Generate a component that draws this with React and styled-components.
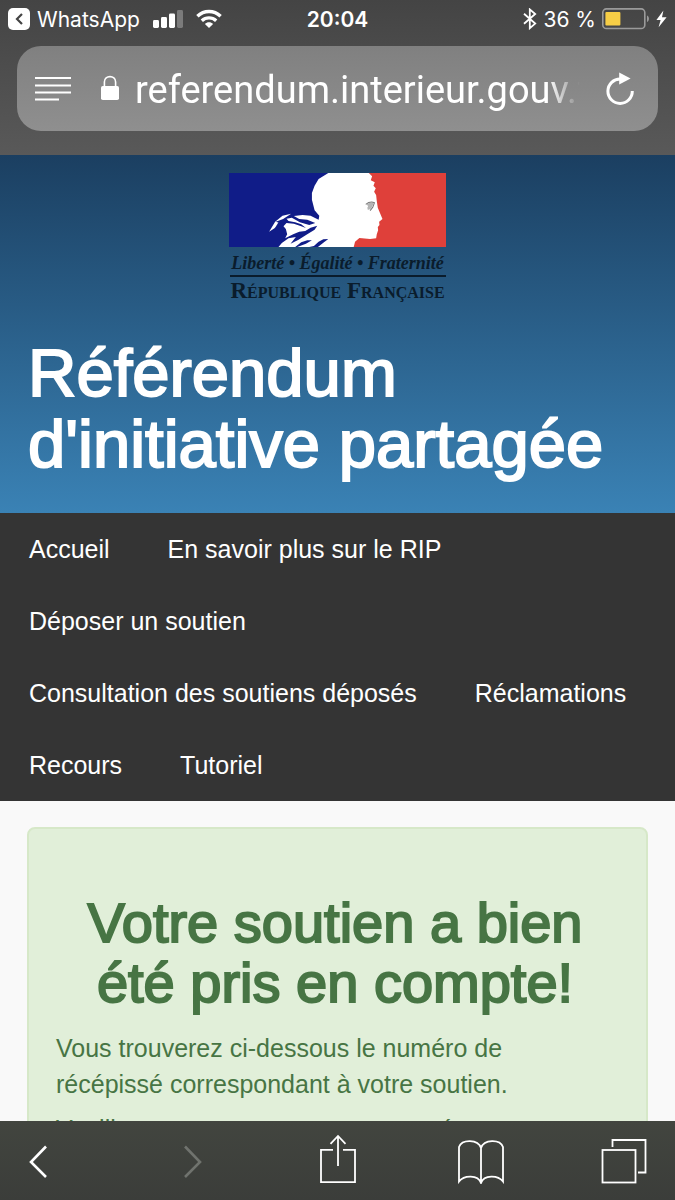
import React from "react";
import styled, { createGlobalStyle } from 'styled-components';

const navLinks = [
  'Accueil',
  'En savoir plus sur le RIP',
  'Déposer un soutien',
  'Consultation des soutiens déposés',
  'Réclamations',
  'Recours',
  'Tutoriel',
];

const SignalIcon = () => (
  <svg width="30" height="20" viewBox="0 0 30 20" fill="#fff" aria-hidden="true">
    <rect x="0" y="11" width="6" height="8" rx="1.4" />
    <rect x="8" y="8" width="6" height="11" rx="1.4" />
    <rect x="16" y="4.5" width="6" height="14.5" rx="1.4" />
    <rect x="24" y="1" width="6" height="18" rx="1.4" fill="#7b7b7b" />
  </svg>
);

const WifiIcon = () => (
  <svg width="26" height="20" viewBox="0 0 26 20" fill="none" stroke="#fff" strokeWidth="3.4" aria-hidden="true">
    <path d="M1.4 7.2C8 .9 18 .9 24.6 7.2" />
    <path d="M5.8 11.7C10 7.9 16 7.9 20.2 11.7" />
    <path d="M13 19L8.9 14.9C11.2 12.8 14.8 12.8 17.1 14.9Z" fill="#fff" stroke="none" />
  </svg>
);

const BluetoothIcon = () => (
  <svg width="14" height="22" viewBox="0 0 14 22" fill="none" stroke="#fff" strokeWidth="1.8" aria-hidden="true">
    <path d="M1 5.8L12.2 15.6L6.8 20.2V1.4L12.2 6L1 15.8" />
  </svg>
);

const BatteryIcon = () => (
  <svg width="48" height="22" viewBox="0 0 48 22" aria-hidden="true">
    <rect x="0.8" y="0.9" width="42" height="19.6" rx="3.6" fill="none" stroke="#9a9a9a" strokeWidth="1.6" />
    <rect x="3.4" y="4" width="15" height="13.6" rx="1" fill="#f7ce46" />
    <path d="M45 7.4C47.6 8.6 47.6 12.8 45 14Z" fill="#9a9a9a" />
  </svg>
);

const BoltIcon = () => (
  <svg width="11" height="20" viewBox="0 0 11 20" fill="#fff" aria-hidden="true">
    <path d="M7.4 1.6L.4 11H4.6L2.6 18.2L10.6 8.2H6Z" />
  </svg>
);

const ReaderIcon = () => (
  <svg width="36" height="26" viewBox="0 0 36 26" stroke="#fff" strokeWidth="2" aria-hidden="true">
    <path d="M0 2H36M0 9.4H36M0 16.6H36M0 23.6H24" />
  </svg>
);

const LockIcon = () => (
  <svg width="18" height="28" viewBox="0 0 18 28" aria-hidden="true">
    <path d="M3.4 12V7C3.4 -.2 14.6 -.2 14.6 7V12" fill="none" stroke="#fff" strokeWidth="1.6" />
    <rect x="0" y="11" width="18" height="14" rx="1.8" fill="#fff" />
  </svg>
);

const ReloadIcon = () => (
  <svg width="28" height="34" viewBox="0 0 28 34" aria-hidden="true">
    <path d="M14.5 7A12.2 12.2 0 1 0 26.3 19" fill="none" stroke="#fff" strokeWidth="3" />
    <path d="M13.2 .6V12.4L24.6 6.6Z" fill="#fff" />
  </svg>
);

const Marianne = () => (
  <svg width="217" height="74" viewBox="28 38 649 222" preserveAspectRatio="none" aria-hidden="true">
    <rect x="28" y="38" width="330" height="222" fill="#101c88" />
    <rect x="358" y="38" width="319" height="222" fill="#df403a" />
    <path
      fill="#fff"
      d="M325 38H446L456 48L452 60L464 66L460 76L467 84L462 94L468 104L470 122L473 142L487 176L477 184L478 194L473 200L474 210L470 222L468 234L450 236L418 233L405 244L401 260H294L312 246L325 236L310 237L296 244L282 257L268 260H232L258 250L276 240L262 240L244 246L226 260H176L186 248L206 234L228 230L212 250L236 238L262 222L284 208L292 196L272 202L256 212L238 214L220 222L196 234L202 222L198 206L191 198L200 188L222 190L244 198L258 203L244 192L226 186L206 182L200 175L216 172L240 186L268 194L286 188L262 178L238 176L222 167L248 164L272 166L296 178L298 166L284 150L276 118L276 98L284 76L296 56Z"
    />
    <path fill="#fff" d="M214 160L188 166L166 184L148 214L164 204L180 188L168 184L190 176Z" />
    <path fill="#101c88" d="M166 202L176 186L188 180L176 196Z" />
    <path d="M440 132Q450 124 461 127L456 140Q450 150 443 148Q440 142 444 138" fill="#b5b5b5" />
    <path d="M437 132Q450 122 463 127L458 141L450 151" fill="none" stroke="#777" strokeWidth="3" />
  </svg>
);

const BackIcon = () => (
  <svg width="20" height="34" viewBox="0 0 20 34" fill="none" stroke="currentColor" strokeWidth="2.6" aria-hidden="true">
    <path d="M18 2.5L3 18L18 33" />
  </svg>
);

const ForwardIcon = () => (
  <svg width="20" height="34" viewBox="0 0 20 34" fill="none" stroke="currentColor" strokeWidth="2.6" aria-hidden="true">
    <path d="M1 2.5L16 18L1 33" />
  </svg>
);

const ShareIcon = () => (
  <svg width="36" height="54" viewBox="0 0 36 54" fill="none" stroke="currentColor" strokeWidth="1.8" aria-hidden="true">
    <path d="M13 15.8H1V48.2H35V15.8H23" />
    <path d="M18 32V2M10.5 9.8L18 2L25.5 9.8" />
  </svg>
);

const BookIcon = () => (
  <svg width="46" height="46" viewBox="0 0 46 46" fill="none" stroke="currentColor" strokeWidth="1.8" aria-hidden="true">
    <path d="M23 10C20 1 4 1 1 9V43.5C6 37 20 36.5 23 45C26 36.5 40 37 45 43.5V9C42 1 26 1 23 10V45" />
  </svg>
);

const TabsIcon = () => (
  <svg width="46" height="46" viewBox="0 0 46 46" fill="none" stroke="currentColor" strokeWidth="1.8" aria-hidden="true">
    <rect x="1.5" y="12" width="33" height="32.5" />
    <path d="M11.5 9V2H44.5V34.5H37" />
  </svg>
);

const StatusBar = () => (
  <Status>
    <StatusSide>
      <BackBadge>
        <svg width="8" height="12" viewBox="0 0 8 12" fill="none" stroke="#444" strokeWidth="2.2" aria-hidden="true">
          <path d="M7 1L2 6L7 11" />
        </svg>
      </BackBadge>
      <Carrier>WhatsApp</Carrier>
      <SignalIcon />
      <WifiIcon />
    </StatusSide>
    <Clock>20:04</Clock>
    <StatusSide $end>
      <BluetoothIcon />
      <span>36 %</span>
      <BatteryIcon />
      <BoltIcon />
    </StatusSide>
  </Status>
);

const AddressBar = () => (
  <Address>
    <IconButton aria-label="Afficher le lecteur"><ReaderIcon /></IconButton>
    <UrlField>
      <LockIcon />
      <UrlInput type="text" aria-label="Adresse" defaultValue="referendum.interieur.gouv.fr" />
    </UrlField>
    <IconButton aria-label="Actualiser"><ReloadIcon /></IconButton>
  </Address>
);

export default function App() {
  return (
    <Screen>
      <GlobalStyle />
      <Chrome>
        <StatusBar />
        <AddressBar />
      </Chrome>
      <Page>
        <Header>
          <Logo>
            <Marianne />
            <Motto>Liberté • Égalité • Fraternité</Motto>
            <Republic>République Française</Republic>
          </Logo>
          <SiteTitle>Référendum d'initiative partagée</SiteTitle>
        </Header>
        <nav>
          <NavList>
            {navLinks.map(label => (
              <li key={label}><NavLink href="#">{label}</NavLink></li>
            ))}
          </NavList>
        </nav>
        <Content>
          <Alert>
            <AlertTitle>Votre soutien a bien été pris en compte!</AlertTitle>
            <AlertText>
              Vous trouverez ci-dessous le numéro de récépissé correspondant à votre soutien.
            </AlertText>
            <AlertText>Veuillez noter et conserver ce numéro.</AlertText>
          </Alert>
        </Content>
      </Page>
      <Toolbar>
        <ToolButton $first aria-label="Précédent"><BackIcon /></ToolButton>
        <ToolButton aria-label="Suivant" disabled><ForwardIcon /></ToolButton>
        <ToolButton aria-label="Partager"><ShareIcon /></ToolButton>
        <ToolButton aria-label="Signets"><BookIcon /></ToolButton>
        <ToolButton aria-label="Onglets"><TabsIcon /></ToolButton>
      </Toolbar>
    </Screen>
  );
}

const GlobalStyle = createGlobalStyle`
  * {
    box-sizing: border-box;
  }
  body {
    margin: 0;
    font-family: "Liberation Sans", Arial, sans-serif;
  }
  svg {
    display: block;
    flex: none;
  }
`;

const Screen = styled.div`
  display: flex;
  flex-direction: column;
  height: 100vh;
  background: #f9f9f9;
`;

const Chrome = styled.div`
  flex: none;
  padding-bottom: 24px;
  background: linear-gradient(#444, #595959);
`;

const Status = styled.div`
  display: grid;
  grid-template-columns: 1fr auto 1fr;
  align-items: center;
  height: 38px;
  padding: 0 8px;
  color: #fff;
  font-family: Inter, "Liberation Sans", sans-serif;
  font-size: 21px;
`;

const StatusSide = styled.div`
  display: flex;
  align-items: center;
  justify-content: ${({ $end }) => ($end ? 'flex-end' : 'flex-start')};
  gap: ${({ $end }) => ($end ? '6px' : '13px')};
`;

const BackBadge = styled.span`
  display: flex;
  align-items: center;
  justify-content: center;
  width: 22px;
  height: 22px;
  border-radius: 5px;
  background: #fff;
`;

const Carrier = styled.span`
  margin-left: -6px;
`;

const Clock = styled.time`
  font-weight: 600;
`;

const Address = styled.div`
  display: flex;
  align-items: center;
  height: 85px;
  margin: 8px 17px 0;
  padding: 0 24px 0 18px;
  border-radius: 24px;
  background: linear-gradient(#808080, #8f8f8f);
`;

const IconButton = styled.button`
  flex: none;
  padding: 0;
  border: 0;
  background: none;
  color: #fff;
`;

const ToolButton = styled(IconButton)`
  display: flex;
  justify-content: ${({ $first }) => ($first ? 'flex-start' : 'center')};
  width: 46px;

  &:disabled {
    color: #70736e;
  }
`;

const UrlField = styled.div`
  display: flex;
  flex: 1;
  align-items: center;
  gap: 16px;
  min-width: 0;
  margin: 0 26px 0 30px;
`;

const UrlInput = styled.input`
  flex: 1;
  min-width: 0;
  height: 56px;
  padding: 2px 0 0;
  border: 0;
  outline: 0;
  background: none;
  color: #fff;
  font-family: Roboto, "Liberation Sans", sans-serif;
  font-size: 38px;
  mask-image: linear-gradient(to right, #000 calc(100% - 32px), transparent);
`;

const Page = styled.main`
  flex: 1;
  min-height: 0;
  overflow: hidden;
`;

const Header = styled.header`
  padding: 18px 28px 34px;
  background: linear-gradient(#1b3f61, #3a82b5);
`;

const Logo = styled.div`
  display: flex;
  flex-direction: column;
  align-items: center;
  height: 127px;
  color: #0a1c2c;
  font-family: "Liberation Serif", "Times New Roman", serif;
  white-space: nowrap;
`;

const Motto = styled.span`
  padding-top: 4px;
  width: 216px;
  border-bottom: 2px solid #0a1c2c;
  font-size: 18px;
  font-style: italic;
  font-weight: bold;
  line-height: 24px;
  text-align: center;
`;

const Republic = styled.span`
  font-size: 23px;
  font-variant: small-caps;
  font-weight: bold;
  line-height: 28px;
`;

const SiteTitle = styled.h1`
  margin: 37px 0 0;
  color: #fff;
  font-size: 67px;
  font-weight: normal;
  line-height: 71px;
  -webkit-text-stroke: 2px #fff;
`;

const NavList = styled.ul`
  display: flex;
  flex-wrap: wrap;
  column-gap: 58px;
  margin: 0;
  padding: 0 29px;
  background: #343434;
  list-style: none;
`;

const NavLink = styled.a`
  display: block;
  color: #fff;
  font-size: 25px;
  line-height: 72px;
  text-decoration: none;
`;

const Content = styled.section`
  padding: 26px 27px;
`;

const Alert = styled.div`
  padding: 64px 32px 27px 27px;
  border: 2px solid #d6e8c8;
  border-radius: 8px;
  background: #e1efd9;
  color: #477544;
`;

const AlertTitle = styled.h2`
  margin: 0 0 17px;
  font-size: 56px;
  font-weight: normal;
  line-height: 60px;
  text-align: center;
  -webkit-text-stroke: 2px #477544;
`;

const AlertText = styled.p`
  margin: 0 0 9px;
  font-size: 25px;
  line-height: 36px;
`;

const Toolbar = styled.footer`
  display: flex;
  flex: none;
  align-items: center;
  justify-content: space-between;
  height: 79px;
  padding: 0 28px;
  background: linear-gradient(#42453f, #3b3d3a);
`;
